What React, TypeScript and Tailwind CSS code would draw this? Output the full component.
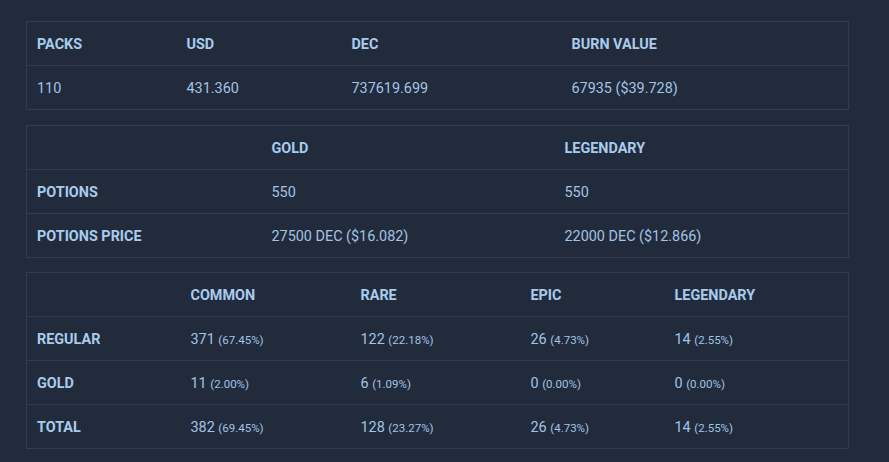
import React from "react";

const packs = {
  head: ["PACKS", "USD", "DEC", "BURN VALUE"],
  row: ["110", "431.360", "737619.699", "67935 ($39.728)"],
  widths: ["w-[150px]", "w-[165px]", "w-[220px]", ""],
};

const potions = [
  ["POTIONS", "550", "550"],
  ["POTIONS PRICE", "27500 DEC ($16.082)", "22000 DEC ($12.866)"],
];

const rarity: [string, [string, string][]][] = [
  ["REGULAR", [["371", "67.45%"], ["122", "22.18%"], ["26", "4.73%"], ["14", "2.55%"]]],
  ["GOLD", [["11", "2.00%"], ["6", "1.09%"], ["0", "0.00%"], ["0", "0.00%"]]],
  ["TOTAL", [["382", "69.45%"], ["128", "23.27%"], ["26", "4.73%"], ["14", "2.55%"]]],
];

const cell = "h-[44px] px-[10px] pt-[2px] text-left align-middle border-b border-[#323d50]";
const th = `${cell} font-bold text-[14.4px] text-[#a9cbec]`;
const td = `${cell} text-[14.4px] text-[#a3c3e4]`;

export default function App() {
  return (
    <div
      className="min-h-[462px] bg-[#222b3c] pl-[26px] pt-[21px] pb-4"
      style={{ fontFamily: "Roboto, 'Liberation Sans', sans-serif" }}
    >
      <div className="w-[823px] flex flex-col">
        {/* Packs */}
        <table className="w-full table-fixed border-collapse border border-[#323d50]">
          <thead>
            <tr>
              {packs.head.map((h, i) => (
                <th key={h} className={`${th} ${packs.widths[i]}`}>
                  {h}
                </th>
              ))}
            </tr>
          </thead>
          <tbody>
            <tr>
              {packs.row.map((v) => (
                <td key={v} className={td}>
                  {v}
                </td>
              ))}
            </tr>
          </tbody>
        </table>

        {/* Potions */}
        <table className="mt-[15px] w-full table-fixed border-collapse border border-[#323d50]">
          <thead>
            <tr>
              <th className={`${th} w-[235px]`}></th>
              <th className={`${th} w-[293px]`}>GOLD</th>
              <th className={th}>LEGENDARY</th>
            </tr>
          </thead>
          <tbody>
            {potions.map((r) => (
              <tr key={r[0]}>
                <td className={th}>{r[0]}</td>
                <td className={td}>{r[1]}</td>
                <td className={td}>{r[2]}</td>
              </tr>
            ))}
          </tbody>
        </table>

        {/* Rarity */}
        <table className="mt-[14px] w-full table-fixed border-collapse border border-[#323d50]">
          <thead>
            <tr>
              <th className={`${th} w-[154px]`}></th>
              <th className={`${th} w-[170px]`}>COMMON</th>
              <th className={`${th} w-[170px]`}>RARE</th>
              <th className={`${th} w-[144px]`}>EPIC</th>
              <th className={th}>LEGENDARY</th>
            </tr>
          </thead>
          <tbody>
            {rarity.map(([label, vals]) => (
              <tr key={label}>
                <td className={th}>{label}</td>
                {vals.map(([n, p], i) => (
                  <td key={i} className={td}>
                    {n} <span className="text-[11.5px]">({p})</span>
                  </td>
                ))}
              </tr>
            ))}
          </tbody>
        </table>
      </div>
    </div>
  );
}
